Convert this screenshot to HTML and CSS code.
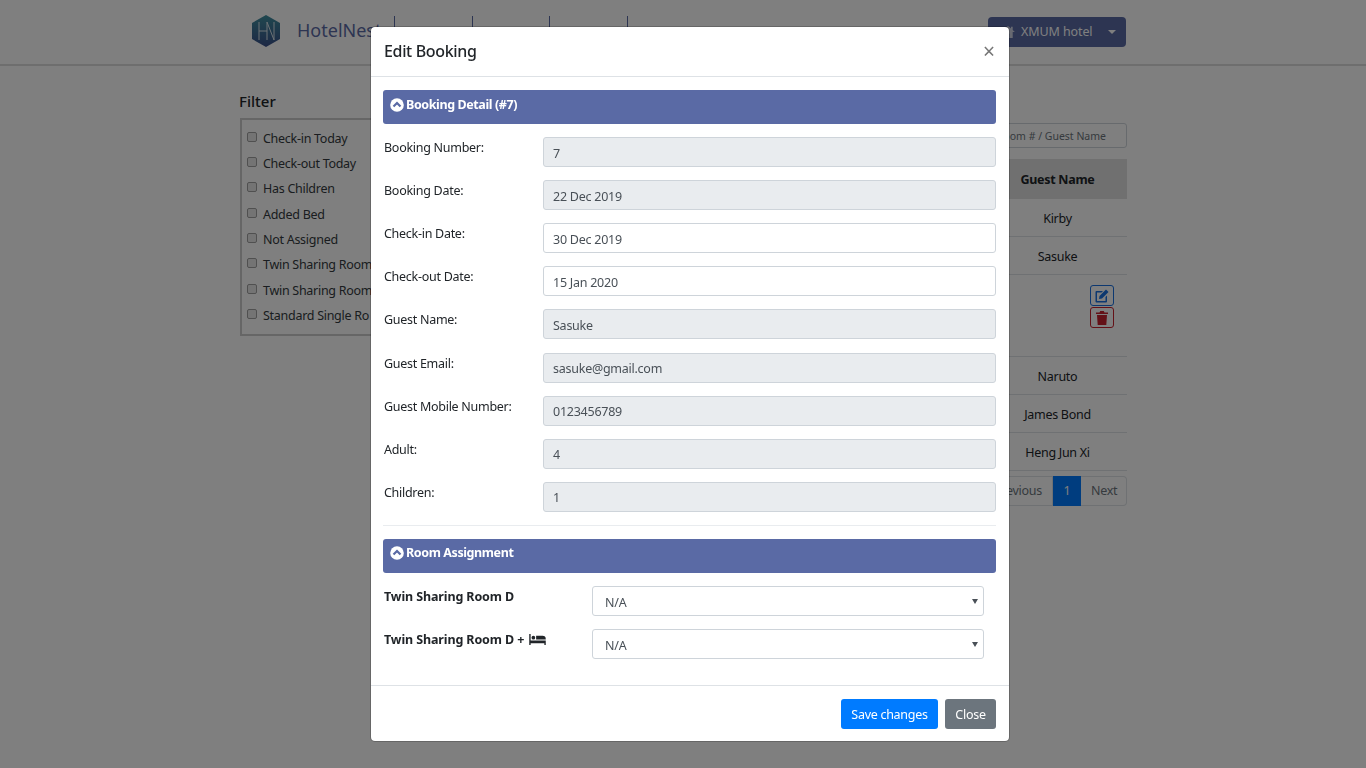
FILE: index.html
```html
<!DOCTYPE html>
<html lang="en">
<head>
<meta charset="utf-8">
<title>HotelNest</title>
<link rel="stylesheet" href="styles.css">
</head>
<body>
<header class="navbar">
  <div class="brand">
    <svg class="logo" viewBox="0 0 32 34" width="32" height="34">
      <defs><linearGradient id="lg" x1="0" y1="0" x2="0" y2="1"><stop offset="0" stop-color="#3f8f9f"/><stop offset="1" stop-color="#3a4f8a"/></linearGradient></defs>
      <path d="M16 1 30 9v16l-14 8-14-8V9z" fill="url(#lg)"/>
      <path d="M9 8v18M9 17h8M17 8v18M17 8l7 18V8" fill="none" stroke="#d8e4ea" stroke-width="1"/>
    </svg>
    <span class="brand-name">HotelNest</span>
  </div>
  <nav class="nav-links">
    <span class="nav-link"></span><span class="nav-link"></span><span class="nav-link"></span>
  </nav>
  <div class="hotel-btn">
    <span class="hotel-main">
      <svg class="home" viewBox="0 0 16 14" width="14" height="12"><path d="M8 0 0 7h2.500v7h4V9h3v5h4V7H16l-2.500-2.200V1h-2v2z" fill="#cfd3e3"/></svg>
      XMUM hotel
    </span>
    <span class="hotel-caret"></span>
  </div>
</header>

<main class="container">
  <aside class="filter">
    <h2 class="filter-title">Filter</h2>
    <div class="filter-box">
      <label class="check"><input type="checkbox"><span>Check-in Today</span></label>
      <label class="check"><input type="checkbox"><span>Check-out Today</span></label>
      <label class="check"><input type="checkbox"><span>Has Children</span></label>
      <label class="check"><input type="checkbox"><span>Added Bed</span></label>
      <label class="check"><input type="checkbox"><span>Not Assigned</span></label>
      <label class="check"><input type="checkbox"><span>Twin Sharing Room</span></label>
      <label class="check"><input type="checkbox"><span>Twin Sharing Room</span></label>
      <label class="check"><input type="checkbox"><span>Standard Single Ro</span></label>
    </div>
  </aside>
  <section class="bookings">
    <input class="search" type="text" placeholder="Room # / Guest Name">
    <div class="table">
      <div class="row head"><span class="cell">Guest Name</span></div>
      <div class="row"><span class="cell">Kirby</span></div>
      <div class="row"><span class="cell">Sasuke</span></div>
      <div class="row actions">
        <button class="icon-btn edit" type="button">
          <svg viewBox="0 0 16 16" width="16" height="16"><path d="M2.500 3H9L7.500 4.500H3v8.500h8.500V9L13 7.500v6a1 1 0 0 1-1 1H2.500a1 1 0 0 1-1-1V4a1 1 0 0 1 1-1z" fill="#1a70e0"/><path d="M12 1.500l2.500 2.500-6.500 6.500-3 .5.500-3z" fill="#1a70e0"/></svg>
        </button>
        <button class="icon-btn del" type="button">
          <svg viewBox="0 0 14 16" width="14" height="16"><path d="M1 2.500h3.500L5.200 1h3.600l.700 1.500H13v1.500H1zM2 5h10l-.7 10H2.700z" fill="#c8232f"/></svg>
        </button>
      </div>
      <div class="row"><span class="cell">Naruto</span></div>
      <div class="row"><span class="cell">James Bond</span></div>
      <div class="row"><span class="cell">Heng Jun Xi</span></div>
    </div>
    <div class="pager">
      <span class="page">Previous</span><span class="page current">1</span><span class="page next">Next</span>
    </div>
  </section>
</main>

<div class="backdrop"></div>

<div class="modal">
  <div class="modal-head">
    <h1 class="modal-title">Edit Booking</h1>
    <span class="close">×</span>
  </div>
  <div class="modal-body">
    <div class="bar">
      <svg class="chev" viewBox="0 0 14 14" width="14" height="14"><circle cx="7" cy="7" r="6.800" fill="#fff"/><path d="M3.500 8.500 7 5l3.500 3.500" fill="none" stroke="#5a6aa5" stroke-width="2.200"/></svg>
      Booking Detail (#7)
    </div>
    <div class="fields">
      <label class="field"><span>Booking Number:</span><input class="control" value="7" readonly></label>
      <label class="field"><span>Booking Date:</span><input class="control" value="22 Dec 2019" readonly></label>
      <label class="field"><span>Check-in Date:</span><input class="control open" value="30 Dec 2019"></label>
      <label class="field"><span>Check-out Date:</span><input class="control open" value="15 Jan 2020"></label>
      <label class="field"><span>Guest Name:</span><input class="control" value="Sasuke" readonly></label>
      <label class="field"><span>Guest Email:</span><input class="control" value="sasuke@gmail.com" readonly></label>
      <label class="field"><span>Guest Mobile Number:</span><input class="control" value="0123456789" readonly></label>
      <label class="field"><span>Adult:</span><input class="control" value="4" readonly></label>
      <label class="field"><span>Children:</span><input class="control" value="1" readonly></label>
    </div>
    <hr class="rule">
    <div class="bar">
      <svg class="chev" viewBox="0 0 14 14" width="14" height="14"><circle cx="7" cy="7" r="6.800" fill="#fff"/><path d="M3.500 8.500 7 5l3.500 3.500" fill="none" stroke="#5a6aa5" stroke-width="2.200"/></svg>
      Room Assignment
    </div>
    <div class="rooms">
      <label class="room"><span>Twin Sharing Room D</span><span class="select-wrap"><select class="control pick"><option>N/A</option></select></span></label>
      <label class="room"><span>Twin Sharing Room D +
        <svg class="bed" viewBox="0 0 18 12" width="17" height="11"><path d="M0 0h1.500v7H18v5h-1.500v-2h-15v2H0z" fill="#212529"/><circle cx="4.500" cy="4" r="2" fill="#212529"/><path d="M7.500 2h7A3.500 3.500 0 0 1 18 5.500V6H7.500z" fill="#212529"/></svg>
      </span><span class="select-wrap"><select class="control pick"><option>N/A</option></select></span></label>
    </div>
  </div>
  <div class="modal-foot">
    <button class="btn primary" type="button">Save changes</button>
    <button class="btn secondary" type="button">Close</button>
  </div>
</div>
</body>
</html>
```
FILE: styles.css
```css
* { box-sizing: border-box; }
html, body { height: 100%; }
body {
  margin: 0;
  overflow: hidden;
  background: #fff;
  color: #212529;
  font-family: "Noto Sans", "Open Sans", sans-serif;
  font-size: 12.500px;
  letter-spacing: -.28px;
  line-height: 20px;
}
.navbar {
  height: 66px;
  display: flex;
  align-items: flex-start;
  width: 888px;
  margin: 0 auto;
  padding: 16px 1px 0 11px;
  position: relative;
}
.navbar::after {
  content: "";
  position: absolute;
  left: -239px;
  width: 1366px;
  top: 64px;
  height: 2px;
  background: #ddd;
}
.brand { display: flex; align-items: center; gap: 15px; width: 144px; height: 30px; flex: none; }
.logo { flex: none; }
.brand-name { font-size: 18px; color: #5a6aa5; letter-spacing: 0; margin-top: -2px; }
.nav-links { display: flex; height: 24px; flex: none; }
.nav-link { width: 77.500px; border-left: 1px solid #5a6aa5; }
.nav-link:last-child { width: 78.500px; border-right: 1px solid #5a6aa5; }
.hotel-btn {
  margin-left: auto;
  margin-top: 1px;
  width: 138px;
  height: 30px;
  display: flex;
  background: #5a6aa5;
  border-radius: 4px;
  color: #fff;
}
.hotel-main { flex: 1; display: flex; align-items: center; gap: 6px; padding-left: 13px; letter-spacing: -.1px; }
.hotel-caret {
  width: 0; height: 0;
  margin: 13px 10px 0 0;
  border-left: 4px solid transparent;
  border-right: 4px solid transparent;
  border-top: 4px solid #fff;
}
.home { flex: none; }
.container {
  width: 888px;
  margin: 0 auto;
  display: flex;
  justify-content: space-between;
  align-items: flex-start;
}
.filter { width: 134px; padding-top: 25px; }
.filter-title { margin: 0 0 6px; font-size: 15px; font-weight: 500; line-height: 21px; letter-spacing: 0; white-space: nowrap; }
.filter-box {
  margin-left: 1px;
  height: 218px;
  border: 2px solid #ccc;
  padding: 6px 0 0 5px;
  white-space: nowrap;
}
.check { display: flex; align-items: center; height: 25.350px; color: #343a40; }
.check input {
  appearance: none;
  margin: 0 6px 0 0;
  width: 10px;
  height: 10px;
  flex: none;
  position: relative;
  top: -2px;
  background: #e8e8e8;
  border: 1px solid #a0a0a0;
  border-radius: 2px;
}
.bookings { width: 400px; padding-top: 57px; display: flex; flex-direction: column; align-items: flex-end; }
.search {
  width: 260px;
  height: 25px;
  border: 1px solid #ced4da;
  border-radius: 3px;
  padding: 0 20px 0 8px;
  font: 10.500px "Noto Sans", sans-serif;
  text-align: right;
}
.search::placeholder { color: #6c757d; opacity: 1; }
.table { width: 100%; margin-top: 11px; }
.row { display: flex; justify-content: flex-end; align-items: center; height: 38px; border-bottom: 1px solid #dee2e6; }
.row.head { height: 40px; background: #e0e0e0; border-bottom: 0; font-weight: 700; }
.cell { width: 139px; text-align: center; padding-top: 2px; }
.row.actions { height: 82px; flex-direction: column; justify-content: flex-start; align-items: flex-end; padding: 10px 13px 0 0; gap: 1px; }
.icon-btn {
  width: 24px; height: 21px; padding: 0;
  background: transparent; border-radius: 3px;
  display: flex; align-items: center; justify-content: center;
}
.icon-btn.edit { border: 1px solid #1a70e0; }
.icon-btn.del { border: 1px solid #c8232f; }
.pager { display: flex; margin-top: 5px; height: 30px; }
.page { padding: 0 10px; display: flex; align-items: center; border: 1px solid #dee2e6; color: #6c757d; }
.page.current { background: #007bff; border-color: #007bff; color: #fff; width: 28px; justify-content: center; padding: 0; }
.page.next { width: 46px; border-left: 0; border-radius: 0 4px 4px 0; }
.backdrop { position: fixed; inset: 0; background: rgba(0, 0, 0, .5); }
.modal {
  position: fixed;
  left: 370px;
  top: 26px;
  width: 640px;
  height: 716px;
  background: #fff;
  border: 1px solid rgba(0, 0, 0, .2);
  border-radius: 5px;
  background-clip: padding-box;
  display: flex;
  flex-direction: column;
}
.modal-head {
  height: 50px;
  border-bottom: 1px solid #dee2e6;
  display: flex;
  align-items: center;
  justify-content: space-between;
  padding: 0 14px 2px 13px;
  flex: none;
}
.modal-title { margin: 0; font-size: 16px; font-weight: 500; line-height: 24px; letter-spacing: -.35px; }
.close { font-size: 21px; color: #777; font-weight: 400; line-height: 20px; letter-spacing: 0; }
.modal-body { flex: 1; padding: 13px 13px 0 12px; }
.bar {
  height: 34px;
  background: #5a6aa5;
  color: #fff;
  border-radius: 3px;
  display: flex;
  align-items: center;
  gap: 2px;
  padding: 0 0 5px 7px;
  font-weight: 700;
  letter-spacing: -.4px;
}
.chev { flex: none; }
.fields { padding-top: 13px; display: grid; row-gap: 13.120px; }
.field { display: flex; align-items: flex-start; padding-left: 1px; }
.field > span { width: 159px; flex: none; padding-top: 1px; }
.control {
  height: 30px;
  width: 453px;
  flex: none;
  border: 1px solid #ced4da;
  border-radius: 3px;
  padding: 2px 9px 0;
  background: #e9ecef;
  color: #495057;
  font: 12.500px "Noto Sans", sans-serif;
  letter-spacing: -.25px;
}
.control.open { background: #fff; }
.rule { margin: 13px 0 13px; border: 0; border-top: 1px solid #e9ecef; }
.rooms { padding-top: 13px; display: grid; row-gap: 13px; }
.room { display: flex; align-items: flex-start; padding-left: 1px; font-weight: 700; letter-spacing: -.12px; }
.room > span:first-child { width: 208px; flex: none; padding-top: 1px; }
.bed { margin-left: 2px; vertical-align: -1px; }
.select-wrap { position: relative; display: block; width: 392px; height: 30px; flex: none; }
.select-wrap::after {
  content: "";
  position: absolute;
  right: 6px;
  top: 13px;
  border-left: 3px solid transparent;
  border-right: 3px solid transparent;
  border-top: 5px solid #495057;
  pointer-events: none;
}
.control.pick { display: block; width: 392px; appearance: none; background: #fff; font-weight: 400; padding: 3px 9px 0 12px; }
.modal-foot {
  height: 56px;
  flex: none;
  border-top: 1px solid #dee2e6;
  display: flex;
  justify-content: flex-end;
  align-items: flex-start;
  gap: 7px;
  padding: 13px 13px 0 0;
}
.btn { height: 30px; border: 0; border-radius: 3px; color: #fff; font: 12.500px "Noto Sans", sans-serif; letter-spacing: -.28px; padding: 0; }
.btn.primary { width: 97px; background: #007bff; }
.btn.secondary { width: 51px; background: #6c757d; }
```
